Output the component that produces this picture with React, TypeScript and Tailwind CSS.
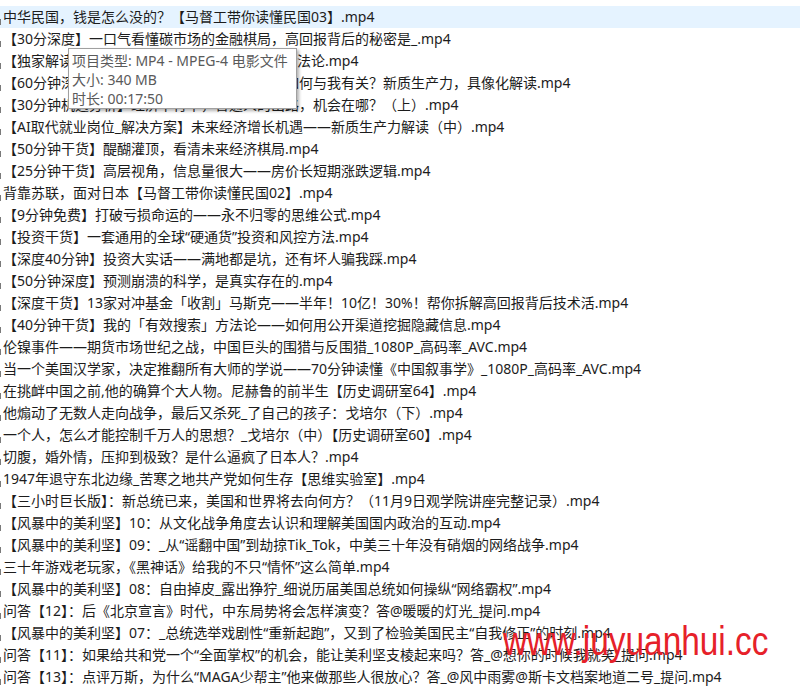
import React from "react";

const files: string[] = [
  "中华民国，钱是怎么没的？【马督工带你读懂民国03】.mp4",
  "【30分深度】一口气看懂碳市场的金融棋局，高回报背后的秘密是_.mp4",
  "【独家解读】一套通用的知识管理与深度研究方法论.mp4",
  "【60分钟深度】全球科技革命的新浪潮，到底如何与我有关？新质生产力，具像化解读.mp4",
  "【30分钟机遇分析】经济下行中，普通人的出路，机会在哪？（上）.mp4",
  "【AI取代就业岗位_解决方案】未来经济增长机遇——新质生产力解读（中）.mp4",
  "【50分钟干货】醍醐灌顶，看清未来经济棋局.mp4",
  "【25分钟干货】高层视角，信息量很大——房价长短期涨跌逻辑.mp4",
  "背靠苏联，面对日本【马督工带你读懂民国02】.mp4",
  "【9分钟免费】打破亏损命运的——永不归零的思维公式.mp4",
  "【投资干货】一套通用的全球“硬通货”投资和风控方法.mp4",
  "【深度40分钟】投资大实话——满地都是坑，还有坏人骗我踩.mp4",
  "【50分钟深度】预测崩溃的科学，是真实存在的.mp4",
  "【深度干货】13家对冲基金「收割」马斯克——半年！10亿！30%！帮你拆解高回报背后技术活.mp4",
  "【40分钟干货】我的「有效搜索」方法论——如何用公开渠道挖掘隐藏信息.mp4",
  "伦镍事件——期货市场世纪之战，中国巨头的围猎与反围猎_1080P_高码率_AVC.mp4",
  "当一个美国汉学家，决定推翻所有大师的学说——70分钟读懂《中国叙事学》_1080P_高码率_AVC.mp4",
  "在挑衅中国之前,他的确算个大人物。尼赫鲁的前半生【历史调研室64】.mp4",
  "他煽动了无数人走向战争，最后又杀死_了自己的孩子：戈培尔（下）.mp4",
  "一个人，怎么才能控制千万人的思想？_戈培尔（中）【历史调研室60】.mp4",
  "切腹，婚外情，压抑到极致？是什么逼疯了日本人？.mp4",
  "1947年退守东北边缘_苦寒之地共产党如何生存【思维实验室】.mp4",
  "【三小时巨长版】：新总统已来，美国和世界将去向何方？（11月9日观学院讲座完整记录）.mp4",
  "【风暴中的美利坚】10：从文化战争角度去认识和理解美国国内政治的互动.mp4",
  "【风暴中的美利坚】09：_从“谣翻中国”到劫掠Tik_Tok，中美三十年没有硝烟的网络战争.mp4",
  "三十年游戏老玩家，《黑神话》给我的不只“情怀”这么简单.mp4",
  "【风暴中的美利坚】08：自由掉皮_露出狰狞_细说历届美国总统如何操纵“网络霸权”.mp4",
  "问答【12】：后《北京宣言》时代，中东局势将会怎样演变？答@暖暖的灯光_提问.mp4",
  "【风暴中的美利坚】07：_总统选举戏剧性“重新起跑”，又到了检验美国民主“自我修正”的时刻.mp4",
  "问答【11】：如果给共和党一个“全面掌权”的机会，能让美利坚支棱起来吗？答_@想你的时候我就笑_提问.mp4",
  "问答【13】：点评万斯，为什么“MAGA少帮主”他来做那些人很放心？答_@风中雨雾@斯卡文档案地道二号_提问.mp4",
];

function FileRow({ name, hovered }: { name: string; hovered: boolean }) {
  return (
    <div className={`h-[22px] flex items-stretch whitespace-nowrap ${hovered ? "bg-[#e5f3ff]" : ""}`}>
      {/* clipped icon edge */}
      <div className="w-[3px] flex flex-col justify-end pb-[3px]">
        <div className="w-px h-[6px] bg-[#7a7a7a]" />
      </div>
      <span className="leading-[22px] text-[14px] text-[#1c1c1c]">{name}</span>
    </div>
  );
}

export default function App() {
  return (
    <div
      className="relative w-[800px] h-[689px] overflow-hidden bg-white pt-[6px]"
      style={{ fontFamily: '"Noto Sans", "Noto Sans CJK SC", sans-serif' }}
    >
      {files.map((f, i) => (
        <FileRow key={i} name={f} hovered={i === 0} />
      ))}

      {/* Explorer info tip */}
      <div className="absolute left-[68px] top-[48px] w-[229px] bg-white border border-[#a0a0a0] shadow-[2px_2px_3px_rgba(0,0,0,0.3)] pl-[3px] pt-[2px] text-[14px] leading-[19px] text-[#5a5a5a] whitespace-nowrap">
        <div>项目类型: MP4 - MPEG-4 电影文件</div>
        <div>大小: 340 MB</div>
        <div>时长: 00:17:50</div>
      </div>

      {/* watermark */}
      <div
        className="absolute left-[503px] top-[621px] text-[40px] leading-[40px] text-[#e62129] whitespace-nowrap origin-left scale-x-[0.835]"
        style={{ fontFamily: '"Liberation Sans", Arial, sans-serif' }}
      >
        www.juyuanhui.cc
      </div>
    </div>
  );
}
